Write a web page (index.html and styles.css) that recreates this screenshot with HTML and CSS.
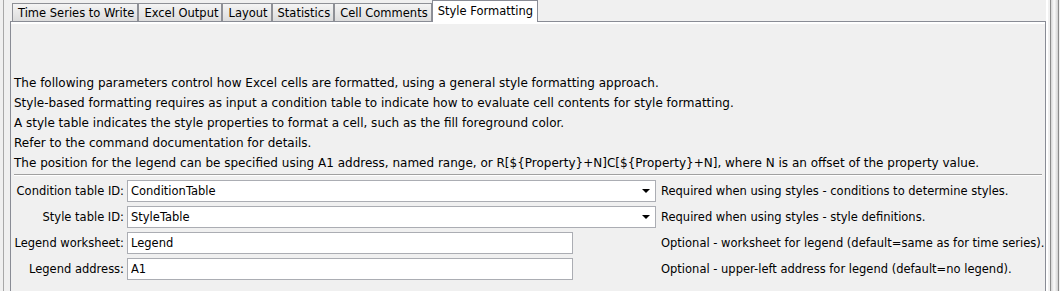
FILE: index.html
```html
<!DOCTYPE html>
<html lang="en">
<head>
  <meta charset="UTF-8">
  <title>Write Excel - Style Formatting</title>
  <link rel="stylesheet" href="styles.css">
</head>
<body>
  <div class="window">
    <div class="edge-left"></div>

    <div class="main">
      <div class="tabs">
        <div class="tab">Time Series to Write</div>
        <div class="tab">Excel Output</div>
        <div class="tab">Layout</div>
        <div class="tab">Statistics</div>
        <div class="tab">Cell Comments</div>
        <div class="tab tab-active">Style Formatting</div>
      </div>

      <div class="panel">
        <div class="notes">
          <p>The following parameters control how Excel cells are formatted, using a general style formatting approach.</p>
          <p>Style-based formatting requires as input a condition table to indicate how to evaluate cell contents for style formatting.</p>
          <p>A style table indicates the style properties to format a cell, such as the fill foreground color.</p>
          <p>Refer to the command documentation for details.</p>
          <p>The position for the legend can be specified using A1 address, named range, or R[${Property}+N]C[${Property}+N], where N is an offset of the property value.</p>
        </div>

        <div class="separator"></div>

        <div class="form">
          <label class="form-label">Condition table ID:</label>
          <div class="combo">
            <span class="combo-value">ConditionTable</span>
            <span class="combo-arrow"></span>
          </div>
          <div class="form-desc">Required when using styles - conditions to determine styles.</div>

          <label class="form-label">Style table ID:</label>
          <div class="combo">
            <span class="combo-value">StyleTable</span>
            <span class="combo-arrow"></span>
          </div>
          <div class="form-desc">Required when using styles - style definitions.</div>

          <label class="form-label">Legend worksheet:</label>
          <input class="text-field" type="text" value="Legend">
          <div class="form-desc">Optional - worksheet for legend (default=same as for time series).</div>

          <label class="form-label">Legend address:</label>
          <input class="text-field" type="text" value="A1">
          <div class="form-desc">Optional - upper-left address for legend (default=no legend).</div>
        </div>
      </div>
    </div>

    <div class="edge-right">
      <div class="splitter"></div>
    </div>
  </div>
</body>
</html>
```

FILE: styles.css
```css
body {
  margin: 0;
  background-color: #f0f0f0;
  font-family: "DejaVu Sans", sans-serif;
  font-size: 12px;
  color: #000;
}
.window {
  display: flex;
  height: 291px;
  overflow: hidden;
}
.edge-left {
  flex: none;
  width: 10px;
  background: linear-gradient(to right, #f0f0f0 3px, #a8a8a8 3px, #a8a8a8 4px, #f0f0f0 4px);
}
.main {
  flex: none;
  width: 1036px;
  display: flex;
  flex-direction: column;
}
.tabs {
  display: flex;
  align-items: flex-end;
  height: 21px;
  padding-left: 2px;
  position: relative;
  z-index: 1;
  font-size: 11.5px;
}
.tab {
  box-sizing: border-box;
  height: 18px;
  padding: 0 3px 0 5px;
  line-height: 18px;
  border: 1px solid #8e9096;
  border-bottom: none;
  background: linear-gradient(#f4f4f4, #e8e8e8 50%, #dcdcdc);
  white-space: nowrap;
}
.tab-active {
  height: 22px;
  margin-bottom: -1px;
  padding: 0 4px 0 5px;
  line-height: 20px;
  background: #fff;
  border-color: #898c95;
}
.panel {
  flex: 1;
  border: 1px solid #898c95;
  border-bottom: none;
  box-shadow: inset 0 2px 0 #fff;
  padding: 51px 1px 0 3px;
}
.notes p {
  margin: 0;
  line-height: 20px;
  white-space: nowrap;
}
.separator {
  margin: 1px 2px 0 0;
  border-top: 1px solid #a0a0a0;
  border-bottom: 1px solid #fff;
}
.form {
  display: grid;
  grid-template-columns: 110px 529px 1fr;
  grid-auto-rows: 22px;
  column-gap: 3px;
  row-gap: 4px;
  margin-top: 4px;
  font-size: 11.5px;
}
.form-label {
  text-align: right;
  line-height: 22px;
  white-space: nowrap;
}
.combo,
.text-field {
  box-sizing: border-box;
  height: 22px;
  border: 1px solid #abadb3;
  background: #fff;
}
.combo {
  display: flex;
  align-items: center;
  justify-content: space-between;
  padding: 0 5px 0 3px;
}
.combo-arrow {
  width: 0;
  height: 0;
  border-left: 4px solid transparent;
  border-right: 4px solid transparent;
  border-top: 4px solid #000;
}
.text-field {
  width: 446px;
  margin: 0;
  padding: 0 3px;
  font: inherit;
  color: #000;
  outline: none;
}
.form-desc {
  padding-left: 2px;
  line-height: 22px;
  white-space: nowrap;
}
.edge-right {
  flex: 1;
  border-left: 2px solid #fff;
  padding-left: 2px;
}
.splitter {
  width: 7px;
  height: 100%;
  border-left: 1px solid #8a8a8a;
  border-right: 1px solid #8a8a8a;
  background: linear-gradient(to right, #d4d4d4, #fafafa 45%, #d0d0d0);
}
```
